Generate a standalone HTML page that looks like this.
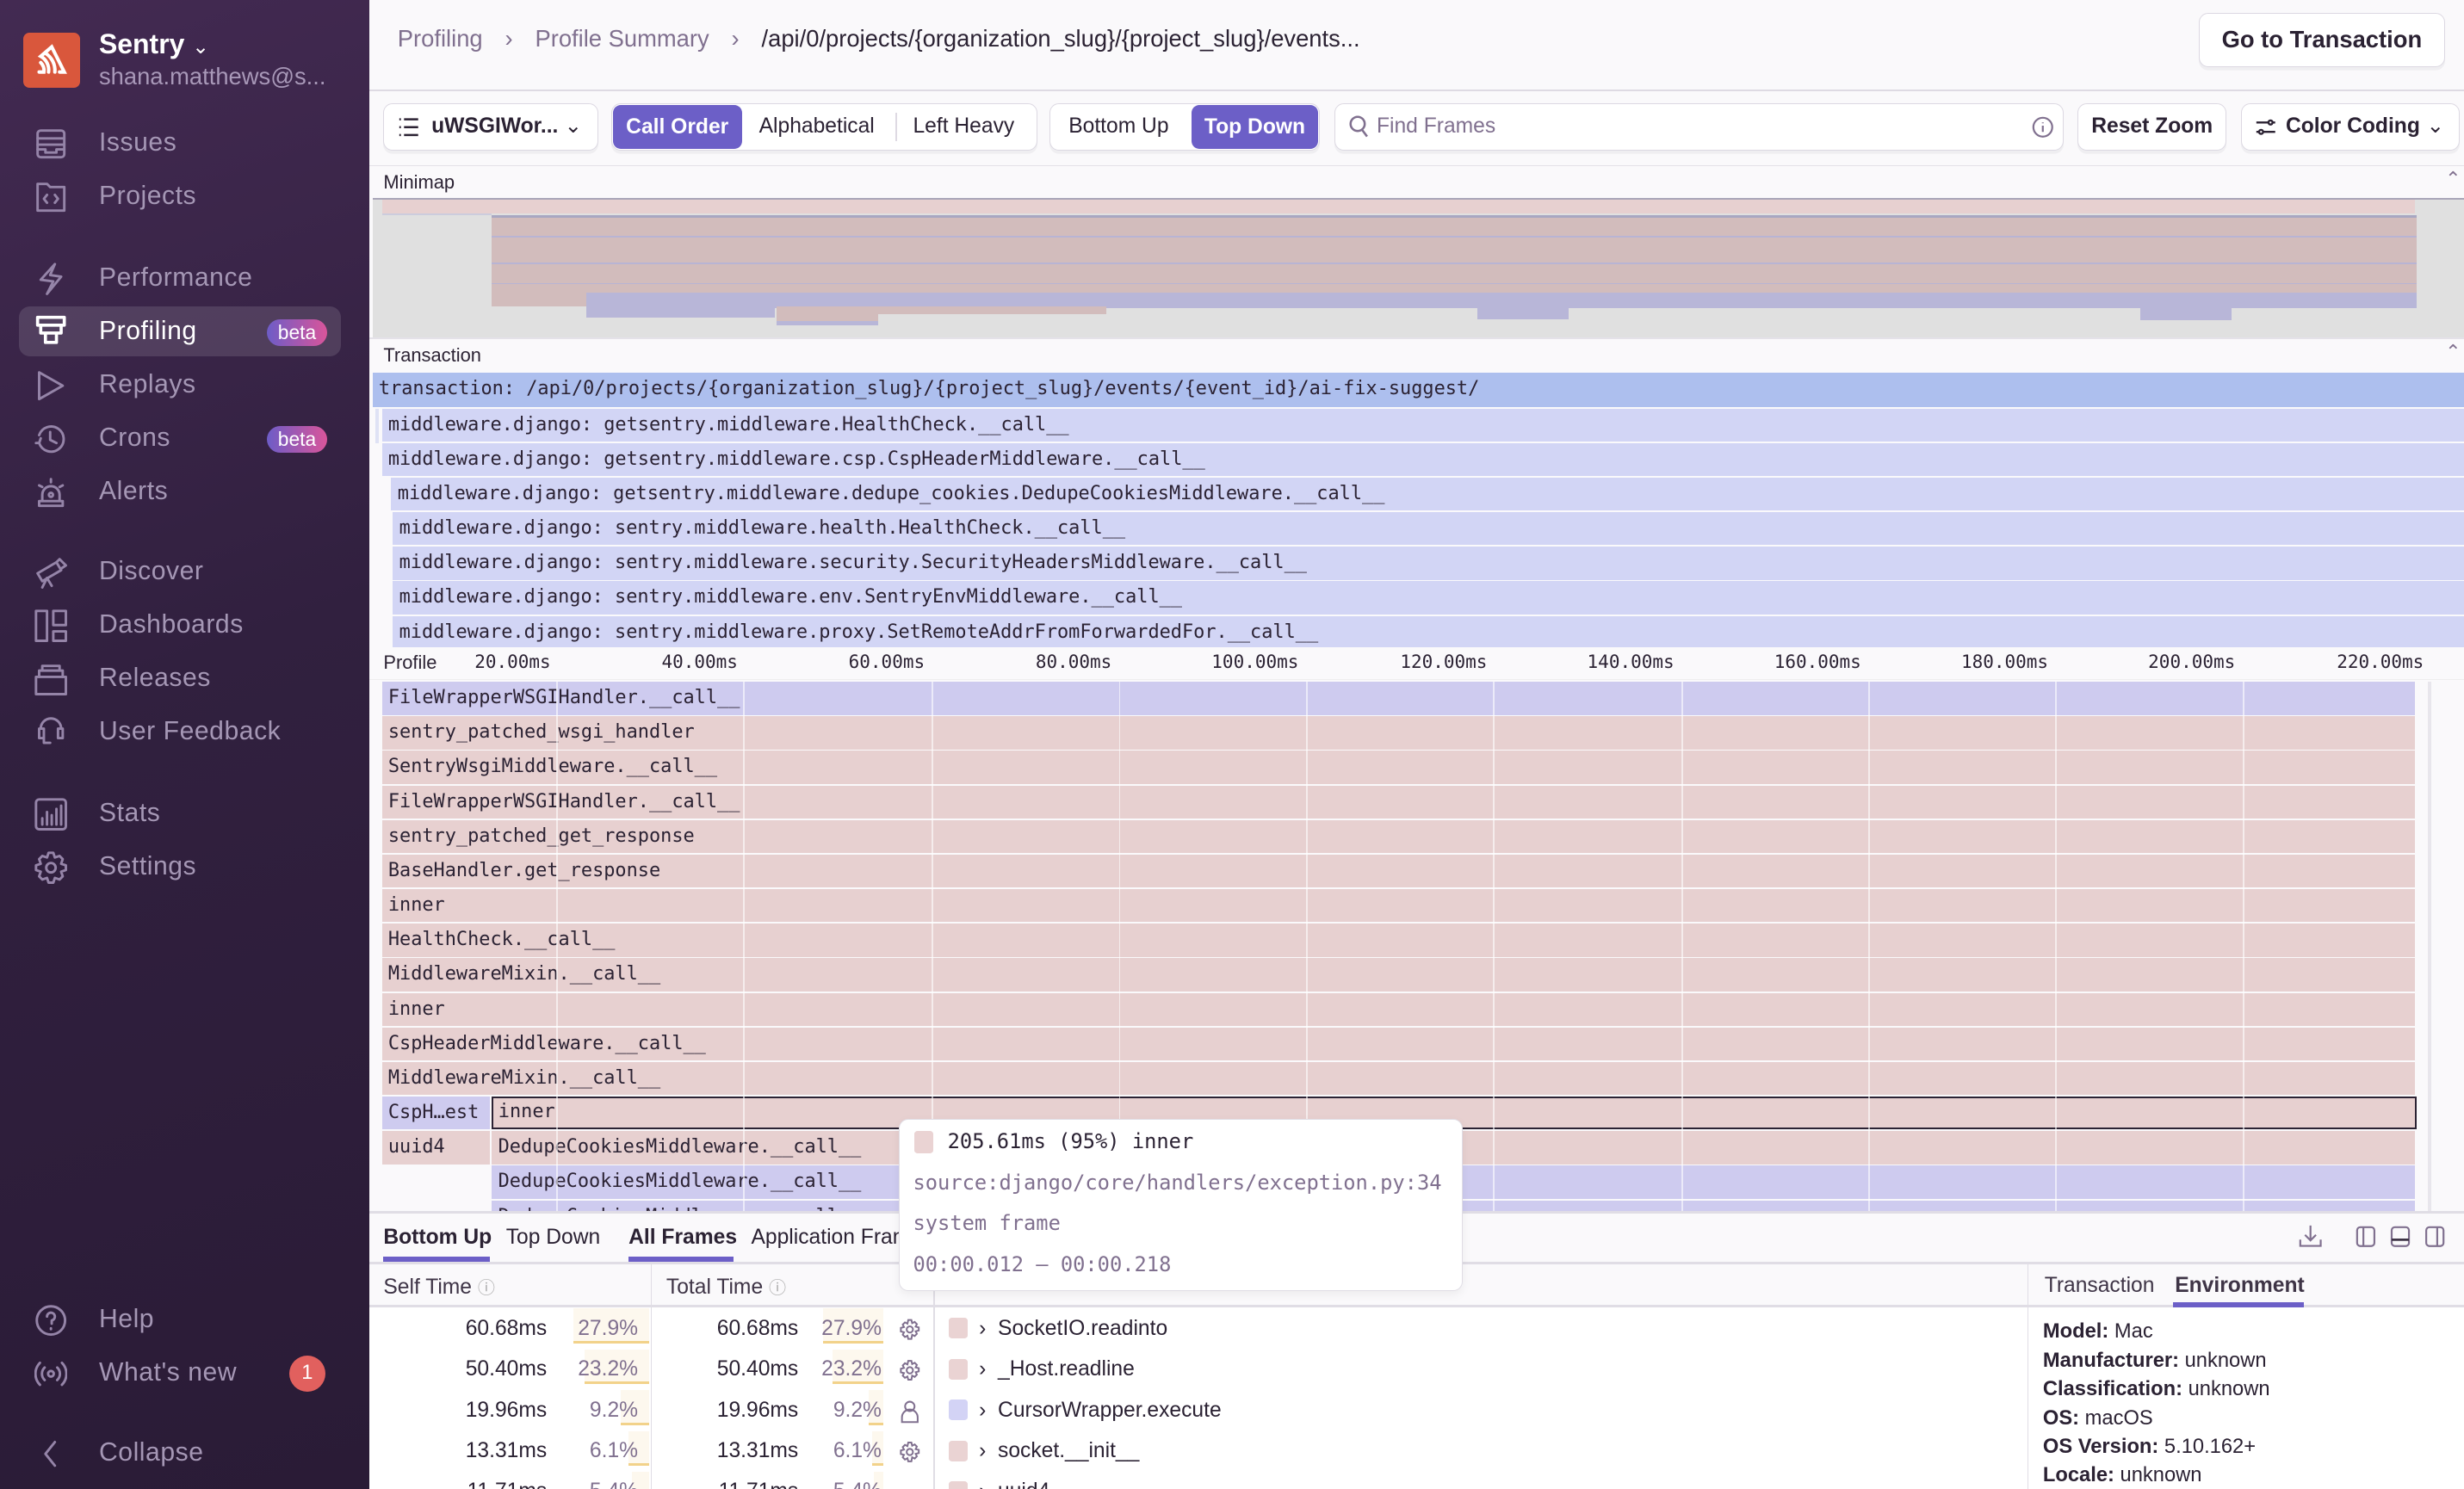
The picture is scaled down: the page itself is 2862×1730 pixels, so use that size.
<!DOCTYPE html>
<html><head><meta charset="utf-8"><style>
*{box-sizing:border-box;margin:0;padding:0}
html,body{width:2862px;height:1730px;overflow:hidden;background:#faf9fb}
#r{position:absolute;left:0;top:0;width:1568px;height:948px;zoom:1.8253;font-family:"Liberation Sans",sans-serif;color:#2b2233;overflow:hidden}
.a{position:absolute}
.sb{left:0;top:0;width:235px;height:948px;background:linear-gradient(160deg,#432a52 0%,#31203f 45%,#2a1b36 100%)}
.ni{position:absolute;left:63px;font-size:16.5px;color:#a597b5;letter-spacing:.3px;line-height:20px}
.ic{position:absolute;left:22px;width:21px;height:21px}
.ic svg{width:21px;height:21px;fill:none;stroke:#9584a8;stroke-width:1.6;stroke-linecap:round;stroke-linejoin:round}
.beta{position:absolute;left:170px;width:38px;height:17px;border-radius:9px;background:linear-gradient(90deg,#6d5cc7,#d9559a);color:#fff;font-size:12.5px;text-align:center;line-height:17px}
.mono{font-family:"DejaVu Sans Mono","Liberation Mono",monospace;font-size:12px}
.btn{position:absolute;background:#fff;border:1px solid #dcd8e2;border-radius:6px;box-shadow:0 2px 0 rgba(40,30,60,.05);font-size:13.5px;font-weight:bold;color:#2b2233;line-height:28px;text-align:center}
.row{position:absolute;height:21px;line-height:21px;padding-left:4px;white-space:nowrap;overflow:hidden}
.pk{background:#e7d0d0}.lv{background:#cecbef}.tv{background:#d2d5f5}
.gl{position:absolute;top:434px;height:338px;width:1px;background:rgba(255,255,255,.6)}
.ax{position:absolute;top:415px;font-size:11.5px;color:#2b2233}
.th{position:absolute;font-size:13.5px;color:#3e3446}
.num{position:absolute;font-size:13.5px;color:#2b2233;text-align:right}
.pc{position:absolute;font-size:13.5px;color:#80708f;text-align:right}
.bar{position:absolute;background:#fdf8ee;border-bottom:2px solid #f2d28a}
.env{font-size:13px;color:#2b2233;line-height:18.3px}
</style></head><body><div id="r">

<!-- sidebar -->
<div class="a sb">
 <div class="a" style="left:15px;top:21px;width:36px;height:35px;background:#d9573c;border-radius:4px"></div>
 <svg class="a" style="left:22px;top:27px" width="22" height="22" viewBox="0 0 22 22" fill="none" stroke="#fff" stroke-width="2.2" stroke-linecap="round"><path d="M3 19h3a7 7 0 0 0-2-6M9 19a10 10 0 0 0-5-10L11 3l8 16h-3"/><path d="M13 19a13 13 0 0 0-6-12"/></svg>
 <div class="a" style="left:63px;top:18px;font-size:17.5px;font-weight:bold;color:#fff">Sentry <span style="font-weight:normal;font-size:13px">&#8964;</span></div>
 <div class="a" style="left:63px;top:40px;font-size:15px;color:#a898b8">shana.matthews@s...</div>

 <div class="ic" style="top:81px"><svg viewBox="0 0 21 21"><rect x="2" y="2" width="17" height="17" rx="2"/><path d="M2 7h17M2 11h17M2 14h5v2h7v-2h5"/></svg></div><div class="ni" style="top:81px">Issues</div>
 <div class="ic" style="top:115px"><svg viewBox="0 0 21 21"><path d="M2 2h6l2 2h9v15H2z"/><path d="M8 9l-2 2.5 2 2.5M13 9l2 2.5-2 2.5"/></svg></div><div class="ni" style="top:115px">Projects</div>
 <div class="ic" style="top:167px"><svg viewBox="0 0 21 21"><path d="M13 1L4 11l8 1-4 8 9-11-7-1z"/></svg></div><div class="ni" style="top:167px">Performance</div>
 <div class="a" style="left:12px;top:195px;width:205px;height:32px;background:rgba(255,255,255,.12);border-radius:7px"></div>
 <div class="ic" style="top:200px"><svg viewBox="0 0 21 21" style="stroke:#fff;stroke-width:2"><rect x="2" y="2" width="17" height="5"/><path d="M4 7v5h13V7M7 12v6h7v-6"/></svg></div><div class="ni" style="top:201px;color:#fff">Profiling</div><div class="beta" style="top:203px">beta</div>
 <div class="ic" style="top:235px"><svg viewBox="0 0 21 21"><path d="M3 2v17l15-8.5z"/></svg></div><div class="ni" style="top:235px">Replays</div>
 <div class="ic" style="top:269px"><svg viewBox="0 0 21 21"><path d="M3 8a8 8 0 1 1 0 5M1 13l2 0 1-3M10 6v5l4 2"/></svg></div><div class="ni" style="top:269px">Crons</div><div class="beta" style="top:271px">beta</div>
 <div class="ic" style="top:303px"><svg viewBox="0 0 21 21"><path d="M3 19h15v-3H3zM5 16v-4a5.5 5.5 0 0 1 11 0v4M10.5 2v2M3 6l2 1M18 6l-2 1"/><circle cx="10.5" cy="12" r="1.3"/></svg></div><div class="ni" style="top:303px">Alerts</div>
 <div class="ic" style="top:354px"><svg viewBox="0 0 21 21"><path d="M2 11l12-7 3 5-12 7zM8 14l-3 6M8 14l3 5M14 4l2-2 4 4-3 2"/></svg></div><div class="ni" style="top:354px">Discover</div>
 <div class="ic" style="top:388px"><svg viewBox="0 0 21 21"><rect x="1" y="1" width="7" height="19"/><rect x="12" y="1" width="8" height="9"/><rect x="12" y="14" width="8" height="6"/></svg></div><div class="ni" style="top:388px">Dashboards</div>
 <div class="ic" style="top:422px"><svg viewBox="0 0 21 21"><rect x="1" y="9" width="19" height="11"/><path d="M3 9V5h15v4M5 5V2h11v3"/></svg></div><div class="ni" style="top:422px">Releases</div>
 <div class="ic" style="top:456px"><svg viewBox="0 0 21 21"><path d="M4 8a6 6 0 0 1 13 0M3 8v6h3V8zM15 8h3v6h-3zM6 14v3h4"/></svg></div><div class="ni" style="top:456px">User Feedback</div>
 <div class="ic" style="top:508px"><svg viewBox="0 0 21 21"><rect x="1" y="1" width="19" height="19" rx="2"/><path d="M5 17v-4M8 17V9M11 17v-6M14 17V7M17 17V5"/></svg></div><div class="ni" style="top:508px">Stats</div>
 <div class="ic" style="top:542px"><svg viewBox="0 0 21 21"><circle cx="10.5" cy="10.5" r="3"/><path d="M9 1h3l1 3 3-1 2 2-1 3 3 1v3l-3 1 1 3-2 2-3-1-1 3H9l-1-3-3 1-2-2 1-3-3-1V9l3-1-1-3 2-2 3 1z"/></svg></div><div class="ni" style="top:542px">Settings</div>
 <div class="ic" style="top:830px"><svg viewBox="0 0 21 21"><circle cx="10.5" cy="10.5" r="9"/><path d="M8 8a2.5 2.5 0 1 1 3 2.5v2M10.5 15.5v.5"/></svg></div><div class="ni" style="top:830px">Help</div>
 <div class="ic" style="top:864px"><svg viewBox="0 0 21 21"><circle cx="10.5" cy="10.5" r="1.8"/><path d="M6.5 6.5a5.5 5.5 0 0 0 0 8M14.5 6.5a5.5 5.5 0 0 1 0 8M3.5 3.5a10 10 0 0 0 0 14M17.5 3.5a10 10 0 0 1 0 14"/></svg></div><div class="ni" style="top:864px">What's new</div>
 <div class="a" style="left:184px;top:863px;width:23px;height:23px;border-radius:50%;background:#e1605e;color:#fff;font-size:13px;text-align:center;line-height:23px">1</div>
 <div class="ic" style="top:915px"><svg viewBox="0 0 21 21"><path d="M13 3l-6 7.5 6 7.5"/></svg></div><div class="ni" style="top:915px">Collapse</div>
</div>

<!-- header -->
<div class="a" style="left:253px;top:16px;font-size:15px;color:#80708f;white-space:nowrap">Profiling <span style="margin:0 10px">&#8250;</span> Profile Summary <span style="margin:0 10px">&#8250;</span> <span style="color:#2b2233">/api/0/projects/{organization_slug}/{project_slug}/events...</span></div>
<div class="btn" style="left:1399px;top:8px;width:157px;height:35px;line-height:33px;font-size:15px">Go to Transaction</div>
<div class="a" style="left:235px;top:57px;width:1333px;height:1px;background:#dedae3"></div>

<!-- toolbar -->
<div class="btn" style="left:244px;top:66px;width:137px;height:30px;text-align:left;padding-left:30px">uWSGIWor...<span style="position:absolute;right:10px;font-weight:normal">&#8964;</span></div>
<svg class="a" style="left:253px;top:74px" width="14" height="14" viewBox="0 0 14 14" stroke="#2b2233" stroke-width="1.4"><path d="M1 2h1M4 2h9M1 7h1M4 7h9M1 12h1M4 12h9"/></svg>
<div class="btn" style="left:389px;top:66px;width:271px;height:30px;font-weight:normal"></div>
<div class="a" style="left:390px;top:67px;width:82px;height:28px;background:#6c5fc7;border-radius:5px;color:#fff;font-size:13.5px;font-weight:bold;text-align:center;line-height:28px">Call Order</div>
<div class="a" style="left:483px;top:73px;font-size:13.5px">Alphabetical</div>
<div class="a" style="left:570px;top:72px;width:1px;height:18px;background:#dedae3"></div>
<div class="a" style="left:581px;top:73px;font-size:13.5px">Left Heavy</div>
<div class="btn" style="left:668px;top:66px;width:172px;height:30px"></div>
<div class="a" style="left:680px;top:73px;font-size:13.5px">Bottom Up</div>
<div class="a" style="left:758px;top:67px;width:81px;height:28px;background:#6c5fc7;border-radius:5px;color:#fff;font-size:13.5px;font-weight:bold;text-align:center;line-height:28px">Top Down</div>
<div class="btn" style="left:849px;top:66px;width:464px;height:30px"></div>
<svg class="a" style="left:858px;top:73px" width="14" height="15" viewBox="0 0 14 15" fill="none" stroke="#80708f" stroke-width="1.4"><circle cx="6" cy="6" r="4.5"/><path d="M9 10l3 4"/></svg>
<div class="a" style="left:876px;top:73px;font-size:13.5px;color:#80708f">Find Frames</div>
<svg class="a" style="left:1293px;top:74px" width="14" height="14" viewBox="0 0 14 14" fill="none" stroke="#80708f" stroke-width="1.2"><circle cx="7" cy="7" r="6"/><path d="M7 6v4M7 4v.5"/></svg>
<div class="btn" style="left:1322px;top:66px;width:95px;height:30px">Reset Zoom</div>
<div class="btn" style="left:1426px;top:66px;width:139px;height:30px;text-align:left;padding-left:28px">Color Coding<span style="position:absolute;right:9px;font-weight:normal">&#8964;</span></div>
<svg class="a" style="left:1435px;top:74px" width="14" height="14" viewBox="0 0 14 14" fill="none" stroke="#2b2233" stroke-width="1.3"><path d="M1 4h8M11 4h2M1 10h2M5 10h8"/><circle cx="10" cy="4" r="1.3"/><circle cx="4" cy="10" r="1.3"/></svg>
<div class="a" style="left:235px;top:105px;width:1333px;height:1px;background:#e4e1e8"></div>

<!-- minimap -->
<div class="a" style="left:244px;top:109px;font-size:12px">Minimap</div>
<div class="a" style="left:1556px;top:107px;font-size:12px;color:#80708f">&#8963;</div>
<div class="a" style="left:237px;top:126px;width:1331px;height:1px;background:#a9a6b8"></div>
<div class="a" style="left:237px;top:127px;width:1331px;height:88px;background:#e0e0e0"></div>
<div class="a" style="left:243px;top:127px;width:1294px;height:9px;background:#e7d0d0"></div>
<div class="a" style="left:243px;top:136px;width:70px;height:1px;background:#ccd"></div>
<div class="a" style="left:313px;top:137px;width:1225px;height:58px;background:#d2bcbc;border-top:2px solid #a8a7c2"></div>
<div class="a" style="left:313px;top:150px;width:1225px;height:1px;background:#b8b4d4"></div>
<div class="a" style="left:313px;top:167px;width:1225px;height:1px;background:#b8b4d4"></div>
<div class="a" style="left:313px;top:180px;width:1225px;height:1px;background:#b8b4d4"></div>
<div class="a" style="left:373px;top:186px;width:1165px;height:10px;background:#b8b6d8"></div>
<div class="a" style="left:373px;top:195px;width:120px;height:7px;background:#b8b6d8"></div>
<div class="a" style="left:494px;top:195px;width:65px;height:12px;background:#d2bcbc;border-bottom:3px solid #b8b6d8"></div>
<div class="a" style="left:559px;top:195px;width:145px;height:5px;background:#d2bcbc"></div>
<div class="a" style="left:940px;top:195px;width:58px;height:8px;background:#b8b6d8"></div>
<div class="a" style="left:1362px;top:195px;width:58px;height:9px;background:#b8b6d8"></div>
<div class="a" style="left:235px;top:215px;width:1333px;height:1px;background:#e4e1e8"></div>

<!-- transaction -->
<div class="a" style="left:244px;top:219px;font-size:12px">Transaction</div>
<div class="a" style="left:1556px;top:217px;font-size:12px;color:#80708f">&#8963;</div>
<div class="row mono" style="left:237px;top:237px;width:1331px;height:22px;background:#adbfee">transaction: /api/0/projects/{organization_slug}/{project_slug}/events/{event_id}/ai-fix-suggest/</div>
<div class="a" style="left:239px;top:260px;width:2px;height:22px;background:#dfe2f5"></div>
<div class="row mono tv" style="left:243px;top:260px;width:1325px">middleware.django: getsentry.middleware.HealthCheck.__call__</div>
<div class="row mono tv" style="left:243px;top:282px;width:1325px">middleware.django: getsentry.middleware.csp.CspHeaderMiddleware.__call__</div>
<div class="row mono tv" style="left:249px;top:304px;width:1319px">middleware.django: getsentry.middleware.dedupe_cookies.DedupeCookiesMiddleware.__call__</div>
<div class="row mono tv" style="left:250px;top:326px;width:1318px">middleware.django: sentry.middleware.health.HealthCheck.__call__</div>
<div class="row mono tv" style="left:250px;top:348px;width:1318px">middleware.django: sentry.middleware.security.SecurityHeadersMiddleware.__call__</div>
<div class="row mono tv" style="left:250px;top:370px;width:1318px">middleware.django: sentry.middleware.env.SentryEnvMiddleware.__call__</div>
<div class="row mono tv" style="left:250px;top:392px;width:1318px">middleware.django: sentry.middleware.proxy.SetRemoteAddrFromForwardedFor.__call__</div>

<!-- axis -->
<div class="a" style="left:235px;top:412px;width:1333px;height:21px;background:#faf9fb;border-bottom:1px solid #eee"></div>
<div class="a" style="left:244px;top:415px;font-size:12px">Profile</div>
<div class="ax mono" style="left:302px">20.00ms</div>
<div class="ax mono" style="left:421px">40.00ms</div>
<div class="ax mono" style="left:540px">60.00ms</div>
<div class="ax mono" style="left:659px">80.00ms</div>
<div class="ax mono" style="left:771px">100.00ms</div>
<div class="ax mono" style="left:891px">120.00ms</div>
<div class="ax mono" style="left:1010px">140.00ms</div>
<div class="ax mono" style="left:1129px">160.00ms</div>
<div class="ax mono" style="left:1248px">180.00ms</div>
<div class="ax mono" style="left:1367px">200.00ms</div>
<div class="ax mono" style="left:1487px">220.00ms</div>

<!-- flame -->
<div class="row mono lv" style="left:243px;top:434px;width:1294px">FileWrapperWSGIHandler.__call__</div>
<div class="row mono pk" style="left:243px;top:456px;width:1294px">sentry_patched_wsgi_handler</div>
<div class="row mono pk" style="left:243px;top:478px;width:1294px">SentryWsgiMiddleware.__call__</div>
<div class="row mono pk" style="left:243px;top:500px;width:1294px">FileWrapperWSGIHandler.__call__</div>
<div class="row mono pk" style="left:243px;top:522px;width:1294px">sentry_patched_get_response</div>
<div class="row mono pk" style="left:243px;top:544px;width:1294px">BaseHandler.get_response</div>
<div class="row mono pk" style="left:243px;top:566px;width:1294px">inner</div>
<div class="row mono pk" style="left:243px;top:588px;width:1294px">HealthCheck.__call__</div>
<div class="row mono pk" style="left:243px;top:610px;width:1294px">MiddlewareMixin.__call__</div>
<div class="row mono pk" style="left:243px;top:632px;width:1294px">inner</div>
<div class="row mono pk" style="left:243px;top:654px;width:1294px">CspHeaderMiddleware.__call__</div>
<div class="row mono pk" style="left:243px;top:676px;width:1294px">MiddlewareMixin.__call__</div>
<div class="row mono lv" style="left:243px;top:698px;width:69px">CspH…est</div>
<div class="row mono pk" style="left:313px;top:698px;width:1225px;border:1.5px solid #2b2233;line-height:18px;padding-left:3px">inner</div>
<div class="row mono pk" style="left:243px;top:720px;width:69px">uuid4</div>
<div class="row mono pk" style="left:313px;top:720px;width:1224px">DedupeCookiesMiddleware.__call__</div>
<div class="row mono lv" style="left:313px;top:742px;width:1224px">DedupeCookiesMiddleware.__call__</div>
<div class="row mono lv" style="left:313px;top:764px;width:1224px">DedupeCookiesMiddleware.__call__</div>
<div class="gl" style="left:354px"></div><div class="gl" style="left:473px"></div><div class="gl" style="left:593px"></div><div class="gl" style="left:712px"></div><div class="gl" style="left:831px"></div><div class="gl" style="left:950px"></div><div class="gl" style="left:1070px"></div><div class="gl" style="left:1189px"></div><div class="gl" style="left:1308px"></div><div class="gl" style="left:1427px"></div>
<div class="a" style="left:1545px;top:434px;width:2px;height:338px;background:#e8e6ec"></div>

<!-- bottom panel -->
<div class="a" style="left:235px;top:771px;width:1333px;height:177px;background:#faf9fb;border-top:2px solid #e0dde5"></div>
<div class="a" style="left:244px;top:780px;font-size:13.5px;font-weight:bold">Bottom Up</div>
<div class="a" style="left:322px;top:780px;font-size:13.5px">Top Down</div>
<div class="a" style="left:400px;top:780px;font-size:13.5px;font-weight:bold">All Frames</div>
<div class="a" style="left:478px;top:780px;font-size:13.5px">Application Frames</div>
<div class="a" style="left:244px;top:800px;width:68px;height:3px;background:#6c5fc7"></div>
<div class="a" style="left:400px;top:800px;width:67px;height:3px;background:#6c5fc7"></div>
<svg class="a" style="left:1463px;top:779px" width="15" height="15" viewBox="0 0 15 15" fill="none" stroke="#80708f" stroke-width="1.2"><path d="M7.5 1v9M4 7l3.5 3.5L11 7M1 10v4h13v-4"/></svg>
<svg class="a" style="left:1499px;top:780px" width="60" height="14" viewBox="0 0 60 14" fill="none" stroke="#80708f" stroke-width="1.2"><rect x="1" y="1" width="11" height="12" rx="2"/><path d="M5 1v12"/><rect x="23" y="1" width="11" height="12" rx="2"/><path d="M23 9h11" stroke="#3e3446" stroke-width="1.5"/><rect x="45" y="1" width="11" height="12" rx="2"/><path d="M52 1v12"/></svg>
<div class="a" style="left:235px;top:803px;width:1333px;height:2px;background:#e0dde5"></div>
<div class="a" style="left:235px;top:805px;width:1333px;height:143px;background:#fff"></div>
<div class="a" style="left:235px;top:805px;width:1333px;height:27px;background:#faf9fb;border-bottom:2px solid #e0dde5"></div>
<div class="th" style="left:244px;top:811px">Self Time <span style="color:#aaa;font-size:11px">&#9432;</span></div>
<div class="th" style="left:424px;top:811px">Total Time <span style="color:#aaa;font-size:11px">&#9432;</span></div>
<div class="a" style="left:414px;top:805px;width:1px;height:143px;background:#e0dde5"></div>
<div class="a" style="left:594px;top:805px;width:1px;height:143px;background:#e0dde5"></div>
<div class="a" style="left:1290px;top:805px;width:1px;height:143px;background:#e0dde5"></div>
<div class="th" style="left:1301px;top:811px">Transaction</div>
<div class="th" style="left:1384px;top:811px;font-weight:bold">Environment</div>
<div class="a" style="left:1383px;top:829px;width:83px;height:3px;background:#6c5fc7"></div>

<!-- rows -->
<div class="bar" style="left:365px;top:833px;width:48px;height:22px"></div><div class="bar" style="left:524px;top:833px;width:38px;height:22px"></div>
<div class="bar" style="left:372px;top:859px;width:41px;height:22px"></div><div class="bar" style="left:530px;top:859px;width:32px;height:22px"></div>
<div class="bar" style="left:395px;top:885px;width:18px;height:22px"></div><div class="bar" style="left:553px;top:885px;width:9px;height:22px"></div>
<div class="bar" style="left:400px;top:911px;width:13px;height:22px"></div><div class="bar" style="left:555px;top:911px;width:7px;height:22px"></div>
<div class="bar" style="left:402px;top:937px;width:11px;height:15px"></div><div class="bar" style="left:556px;top:937px;width:6px;height:15px"></div>

<div class="num" style="left:270px;top:838px;width:78px">60.68ms</div><div class="pc" style="left:350px;top:838px;width:56px">27.9%</div>
<div class="num" style="left:430px;top:838px;width:78px">60.68ms</div><div class="pc" style="left:505px;top:838px;width:56px">27.9%</div>
<div class="num" style="left:270px;top:864px;width:78px">50.40ms</div><div class="pc" style="left:350px;top:864px;width:56px">23.2%</div>
<div class="num" style="left:430px;top:864px;width:78px">50.40ms</div><div class="pc" style="left:505px;top:864px;width:56px">23.2%</div>
<div class="num" style="left:270px;top:890px;width:78px">19.96ms</div><div class="pc" style="left:350px;top:890px;width:56px">9.2%</div>
<div class="num" style="left:430px;top:890px;width:78px">19.96ms</div><div class="pc" style="left:505px;top:890px;width:56px">9.2%</div>
<div class="num" style="left:270px;top:916px;width:78px">13.31ms</div><div class="pc" style="left:350px;top:916px;width:56px">6.1%</div>
<div class="num" style="left:430px;top:916px;width:78px">13.31ms</div><div class="pc" style="left:505px;top:916px;width:56px">6.1%</div>
<div class="num" style="left:270px;top:942px;width:78px">11.71ms</div><div class="pc" style="left:350px;top:942px;width:56px">5.4%</div>
<div class="num" style="left:430px;top:942px;width:78px">11.71ms</div><div class="pc" style="left:505px;top:942px;width:56px">5.4%</div>

<svg class="a" style="left:572px;top:838px" width="14" height="110" viewBox="0 0 14 110" fill="none" stroke="#80708f" stroke-width="1.1"><circle cx="7" cy="8" r="2"/><path d="M6 2h2l.5 2 1.6-.8 1.4 1.4-.8 1.6 2 .5v2l-2 .5.8 1.6-1.4 1.4-1.6-.8L8 14H6l-.5-2-1.6.8-1.4-1.4.8-1.6-2-.5V7l2-.5-.8-1.6L3.9 3.5l1.6.8z"/><g transform="translate(0,26)"><circle cx="7" cy="8" r="2"/><path d="M6 2h2l.5 2 1.6-.8 1.4 1.4-.8 1.6 2 .5v2l-2 .5.8 1.6-1.4 1.4-1.6-.8L8 14H6l-.5-2-1.6.8-1.4-1.4.8-1.6-2-.5V7l2-.5-.8-1.6L3.9 3.5l1.6.8z"/></g><g transform="translate(0,52)"><circle cx="7" cy="5" r="3"/><path d="M2 15v-3a5 5 0 0 1 10 0v3z"/></g><g transform="translate(0,78)"><circle cx="7" cy="8" r="2"/><path d="M6 2h2l.5 2 1.6-.8 1.4 1.4-.8 1.6 2 .5v2l-2 .5.8 1.6-1.4 1.4-1.6-.8L8 14H6l-.5-2-1.6.8-1.4-1.4.8-1.6-2-.5V7l2-.5-.8-1.6L3.9 3.5l1.6.8z"/></g></svg>

<div class="a" style="left:604px;top:839px;width:12px;height:13px;background:#ead3d3;border-radius:2px"></div>
<div class="a" style="left:604px;top:865px;width:12px;height:13px;background:#ead3d3;border-radius:2px"></div>
<div class="a" style="left:604px;top:891px;width:12px;height:13px;background:#d3d3f5;border-radius:2px"></div>
<div class="a" style="left:604px;top:917px;width:12px;height:13px;background:#ead3d3;border-radius:2px"></div>
<div class="a" style="left:604px;top:943px;width:12px;height:13px;background:#ead3d3;border-radius:2px"></div>
<div class="th" style="left:623px;top:838px;color:#2b2233">&#8250;&nbsp; SocketIO.readinto</div>
<div class="th" style="left:623px;top:864px;color:#2b2233">&#8250;&nbsp; _Host.readline</div>
<div class="th" style="left:623px;top:890px;color:#2b2233">&#8250;&nbsp; CursorWrapper.execute</div>
<div class="th" style="left:623px;top:916px;color:#2b2233">&#8250;&nbsp; socket.__init__</div>
<div class="th" style="left:623px;top:942px;color:#2b2233">&#8250;&nbsp; uuid4</div>

<div class="a env" style="left:1300px;top:839px"><b>Model:</b> Mac<br><b>Manufacturer:</b> unknown<br><b>Classification:</b> unknown<br><b>OS:</b> macOS<br><b>OS Version:</b> 5.10.162+<br><b>Locale:</b> unknown</div>

<!-- tooltip -->
<div class="a" style="left:572px;top:712px;width:359px;height:110px;background:#fff;border:1px solid #e0dde5;border-radius:6px;box-shadow:0 2px 6px rgba(0,0,0,.06)"></div>
<div class="a" style="left:582px;top:720px;width:12px;height:14px;background:#ead3d3;border-radius:2px"></div>
<div class="a mono" style="left:603px;top:719px;font-size:13px;color:#2b2233">205.61ms (95%) inner</div>
<div class="a mono" style="left:581px;top:745px;font-size:13px;color:#80708f">source:django/core/handlers/exception.py:34</div>
<div class="a mono" style="left:581px;top:771px;font-size:13px;color:#80708f">system frame</div>
<div class="a mono" style="left:581px;top:797px;font-size:13px;color:#80708f">00:00.012 — 00:00.218</div>

</div></body></html>
